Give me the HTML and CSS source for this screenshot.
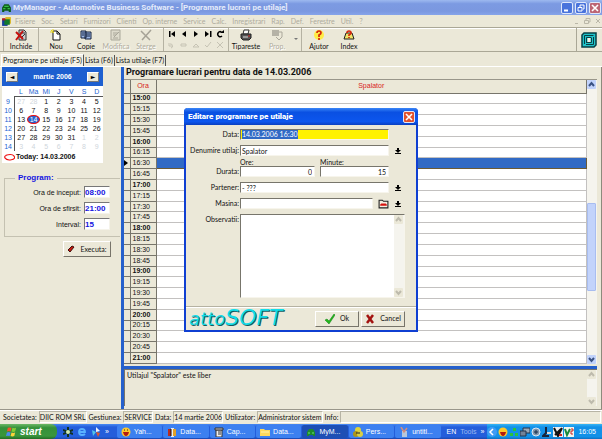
FILE: index.html
```
<!DOCTYPE html>
<html lang="ro">
<head>
<meta charset="utf-8">
<title>MyManager - Automotive Business Software</title>
<link rel="stylesheet" href="styles.css">
</head>
<body>
<div class="app">
  <header class="titlebar">
    <svg class="ico" viewBox="0 0 10 10"><path d="M1 5l2-3h4l2 3v4H7V8H3v1H1z" fill="#0b5c17"/><path d="M3 4h4M2 6h2M6 6h2" stroke="#35c04a"/></svg>
    <h1>MyManager - Automotive Business Software - [Programare lucrari pe utilaje]</h1>
    <div class="winbtns">
      <button class="wb" aria-label="Minimize"><svg viewBox="0 0 10 10"><path d="M2 7.500h4" stroke="#fff" stroke-width="2"/></svg></button>
      <button class="wb" aria-label="Restore"><svg viewBox="0 0 10 10"><path d="M4 4V2h4v4H7M2 4.500h4V8H2z" fill="none" stroke="#fff"/></svg></button>
      <button class="wb close faded" aria-label="Close"><svg viewBox="0 0 10 10"><path d="M2 2l6 6M8 2L2 8" stroke="#fff" stroke-width="1.600"/></svg></button>
    </div>
  </header>
  <nav class="menubar">
    <svg class="ico" viewBox="0 0 10 10"><path d="M1 3h5v6H1z" fill="#163c9c"/><path d="M4 1h5v6H4z" fill="#d9b51c"/><path d="M3 3h5v5H3z" fill="#137a2e"/><path d="M1 2h3v2H1z" fill="#b31d1d"/></svg>
    <button>Fisiere</button><button>Soc.</button><button>Setari</button><button>Furnizori</button><button>Clienti</button><button>Op. interne</button><button>Service</button><button>Calc.</button><button>Inregistrari</button><button>Rap.</button><button>Def.</button><button>Ferestre</button><button>Util.</button><button>?</button>
    <svg class="mdi" viewBox="0 0 28 8"><path d="M2 6.500h3M13 3V1.500h4V5h-1M11.500 3.500h4v3h-4zM23 2l4 4M27 2l-4 4" fill="none" stroke="#bab7a8"/></svg>
  </nav>
  <div class="toolbar">
    <div class="tgroup first">
      <button class="tool"><svg viewBox="0 0 12 12"><path d="M4 1h5l2 2v8H4z" fill="#ccc" stroke="#333"/><path d="M5 4h5M6 9l4-4" stroke="#333"/><path d="M1 3l7 7M8 2L1 11" stroke="#c4120e" stroke-width="2"/></svg>Inchide</button>
    </div>
    <div class="tgroup">
      <button class="tool"><svg viewBox="0 0 12 12"><path d="M3 2h4l3 3v6H3z" fill="#fff" stroke="#111"/><path d="M7 2v3h3" fill="none" stroke="#111"/><path d="M1 1l3 3M3 0v3M0 3h3" stroke="#e5d51b"/></svg>Nou</button>
      <button class="tool"><svg viewBox="0 0 12 12"><path d="M1 2h5v7H1zM5 3h6v7H5z" fill="#9bb6e5" stroke="#15233f"/><path d="M6 5h4M6 7h4M2 4h2M2 6h2" stroke="#15233f"/></svg>Copie</button>
      <button class="tool" disabled><svg viewBox="0 0 12 12"><path d="M1 1h9v10H1z" fill="#dedbcc" stroke="#aaa79a"/><path d="M3 4h5M3 6h3M3 9h5M4 8l5-5" stroke="#aaa79a"/></svg>Modifica</button>
      <button class="tool" disabled><svg viewBox="0 0 12 12"><path d="M1 2l9 9M11 1L2 11" stroke="#a5a296" stroke-width="1.500"/></svg>Sterge</button>
    </div>
    <div class="tgroup navgrid">
      <button aria-label="First"><svg viewBox="0 0 8 8"><path d="M7 1v6L3 4z"/><path d="M1 1h1.500v6H1z"/></svg></button>
      <button aria-label="Previous"><svg viewBox="0 0 8 8"><path d="M6 1v6L2 4z"/></svg></button>
      <button aria-label="Next"><svg viewBox="0 0 8 8"><path d="M2 1v6l4-3z"/></svg></button>
      <button aria-label="Last"><svg viewBox="0 0 8 8"><path d="M1 1v6l4-3z"/><path d="M6 1h1.500v6H6z"/></svg></button>
      <button aria-label="Refresh"><svg viewBox="0 0 8 8"><path d="M6 6A2.500 2.500 0 1 1 5.500 2" fill="none" stroke="#000" stroke-width="1.500"/><path d="M4 3h4V0z"/></svg></button>
      <button disabled aria-label="Undo"><svg viewBox="0 0 8 8"><path d="M2 3a2 2 0 1 1 1 4M1 2v3h3" class="dim"/></svg></button>
      <button disabled aria-label="Remove"><svg viewBox="0 0 8 8"><path d="M1 3h5v2H1z" class="dim"/></svg></button>
      <button disabled aria-label="Edit"><svg viewBox="0 0 8 8"><path d="M1 6l3-3 3 3z" class="dim"/></svg></button>
      <button disabled aria-label="Post"><svg viewBox="0 0 8 8"><path d="M1 4l2 2 4-5" class="dim"/></svg></button>
      <button disabled aria-label="Cancel edit"><svg viewBox="0 0 8 8"><path d="M1 1l6 6M7 1L1 7" class="dim"/></svg></button>
    </div>
    <div class="tgroup print">
      <button class="tool"><svg viewBox="0 0 12 12"><path d="M4 1h5l-1 4H3z" fill="#fff" stroke="#333"/><path d="M1 5h10v4l-2 2H3L1 9z" fill="#555" stroke="#222"/><path d="M3 8h5" stroke="#ddd"/><path d="M8 7h2" stroke="#c22"/></svg>Tipareste</button>
      <button class="tool" disabled><svg viewBox="0 0 12 12"><path d="M1 1h7v6H1z" fill="#b5b2a6"/><path d="M8 3h3v5l-3 3-3-3" fill="none" stroke="#aaa79a"/></svg>Prop.</button>
      <span class="drop"></span>
    </div>
    <div class="tgroup">
      <button class="tool"><svg viewBox="0 0 12 12"><circle cx="6" cy="6" r="5" fill="#ffec45"/><path d="M4 4q0-2 2-2t2 2q0 1-2 2v2M6 9v2" fill="none" stroke="#d5260d" stroke-width="1.700"/></svg>Ajutor</button>
      <button class="tool"><svg viewBox="0 0 12 12"><path d="M1 10l2-6h6l2 6z" fill="#efe46a" stroke="#222"/><path d="M4 4q0-2 2-2t2 2q0 1-2 2v1M6 8v1" fill="none" stroke="#d5260d" stroke-width="1.700"/></svg>Index</button>
    </div>
    <div class="brand"><svg viewBox="0 0 16 16"><path d="M1 3l2-2h12v12l-2 2H1z" fill="#1fc3c9" stroke="#083f44" stroke-width="1.500"/><path d="M3.500 12V3.500h9M12.500 5v7.500H5M5.500 11V5.500h5M10.500 6v4.500H6" fill="none" stroke="#083f44"/><path d="M6.500 6h3v4h-3z" fill="#f4f1e4"/></svg></div>
  </div>
  <div class="tabs" role="tablist">
    <button role="tab" aria-selected="true" class="on">Programare pe utilaje (F5)</button><button role="tab">Lista (F6)</button><button role="tab">Lista utilaje (F7)</button>
  </div>
  <main class="work">
    <aside class="side">
      <section class="cal">
        <div class="calhead"><button aria-label="Luna precedenta">◄</button><strong>martie 2006</strong><button aria-label="Luna urmatoare">►</button></div>
        <table>
          <thead><tr><th></th><th>L</th><th>Ma</th><th>Mi</th><th>J</th><th>V</th><th>S</th><th>D</th></tr></thead>
          <tbody>
            <tr><th>9</th><td class="o">27</td><td class="o">28</td><td>1</td><td>2</td><td>3</td><td>4</td><td>5</td></tr>
            <tr><th>10</th><td>6</td><td>7</td><td>8</td><td>9</td><td>10</td><td>11</td><td>12</td></tr>
            <tr><th>11</th><td>13</td><td class="today"><span>14</span></td><td>15</td><td>16</td><td>17</td><td>18</td><td>19</td></tr>
            <tr><th>12</th><td>20</td><td>21</td><td>22</td><td>23</td><td>24</td><td>25</td><td>26</td></tr>
            <tr><th>13</th><td>27</td><td>28</td><td>29</td><td>30</td><td>31</td><td class="o">1</td><td class="o">2</td></tr>
            <tr><th>14</th><td class="o">3</td><td class="o">4</td><td class="o">5</td><td class="o">6</td><td class="o">7</td><td class="o">8</td><td class="o">9</td></tr>
          </tbody>
        </table>
        <p class="now"><svg viewBox="0 0 12 8"><path d="M3 2q-3 1-2 3 2 3 7 2t3-4Q9 0 2 2" fill="none" stroke="#e11" stroke-width="1.200"/></svg>Today: 14.03.2006</p>
      </section>
      <fieldset class="prog">
        <legend>Program:</legend>
        <label for="h1">Ora de inceput:</label><input id="h1" value="08:00">
        <label for="h2">Ora de sfirsit:</label><input id="h2" value="21:00">
        <label for="h3">Interval:</label><input id="h3" value="15">
      </fieldset>
      <button class="btn exec"><svg viewBox="0 0 8 8"><path d="M1 5l4-4 2 1-4 5z" fill="#c31a10" stroke="#40100c"/></svg>Executa:</button>
    </aside>
    <section class="plan">
      <h2>Programare lucrari pentru data de 14.03.2006</h2>
      <div class="gridwrap">
        <table class="grid">
          <thead><tr><th class="mark"></th><th class="hour">Ora</th><th>Spalator</th></tr></thead>
          <tbody>
            <tr class="h"><th></th><th>15:00</th><td></td></tr>
            <tr><th></th><th>15:15</th><td></td></tr>
            <tr><th></th><th>15:30</th><td></td></tr>
            <tr><th></th><th>15:45</th><td></td></tr>
            <tr class="h"><th></th><th>16:00</th><td></td></tr>
            <tr><th></th><th>16:15</th><td></td></tr>
            <tr class="sel"><th><i></i></th><th>16:30</th><td></td></tr>
            <tr><th></th><th>16:45</th><td></td></tr>
            <tr class="h"><th></th><th>17:00</th><td></td></tr>
            <tr><th></th><th>17:15</th><td></td></tr>
            <tr><th></th><th>17:30</th><td></td></tr>
            <tr><th></th><th>17:45</th><td></td></tr>
            <tr class="h"><th></th><th>18:00</th><td></td></tr>
            <tr><th></th><th>18:15</th><td></td></tr>
            <tr><th></th><th>18:30</th><td></td></tr>
            <tr><th></th><th>18:45</th><td></td></tr>
            <tr class="h"><th></th><th>19:00</th><td></td></tr>
            <tr><th></th><th>19:15</th><td></td></tr>
            <tr><th></th><th>19:30</th><td></td></tr>
            <tr><th></th><th>19:45</th><td></td></tr>
            <tr class="h"><th></th><th>20:00</th><td></td></tr>
            <tr><th></th><th>20:15</th><td></td></tr>
            <tr><th></th><th>20:30</th><td></td></tr>
            <tr><th></th><th>20:45</th><td></td></tr>
            <tr class="h"><th></th><th>21:00</th><td></td></tr>
          </tbody>
        </table>
        <div class="sb"><svg viewBox="0 0 9 9"><path d="M2 6l2.500-3L7 6"/></svg><span class="above"></span><span class="thumb"></span><span class="below"></span><svg viewBox="0 0 9 9"><path d="M2 3l2.500 3L7 3"/></svg></div>
      </div>
      <div class="memo"><p>Utilajul "Spalator" este liber</p><div class="sb off"><svg viewBox="0 0 9 9"><path d="M2 6l2.500-3L7 6"/></svg><span class="below"></span><svg viewBox="0 0 9 9"><path d="M2 3l2.500 3L7 3"/></svg></div></div>
    </section>
  </main>
  <footer class="status">
    <span>Societatea:</span><b class="s1">DIIC ROM SRL</b>
    <span>Gestiunea:</span><b class="s2">SERVICE</b>
    <span>Data:</span><b class="s3">14 martie 2006</b>
    <span>Utilizator:</span><b class="s4">Administrator sistem</b>
    <span>Info:</span><b class="s5"></b>
  </footer>
  <div class="taskbar">
    <button class="start"><svg viewBox="0 0 12 12"><path d="M2 2q2-1 4 0L5 6Q3 5 1 6z" fill="#f0562b"/><path d="M7 2q2 1 4 0l-1 4q-2 1-4 0z" fill="#84cc35"/><path d="M1 7q2-1 4 0l-1 4q-2-1-4 0z" fill="#4a8bf0"/><path d="M6 7q2 1 4 0l-1 4q-2 1-4 0z" fill="#fbd33b"/></svg>start</button>
    <div class="quick">
      <svg viewBox="0 0 10 10"><path d="M5 0v10M0 3l10 4M0 7l10-4" stroke="#13321f" stroke-width="2"/><circle cx="5" cy="5" r="2" fill="#cfe9b0"/></svg>
      <svg viewBox="0 0 10 10"><path d="M2 5h6q0-3-3-3T2 5t3 3q2 0 3-1" fill="none" stroke="#5ab2ff" stroke-width="1.800"/></svg>
      <svg viewBox="0 0 10 10"><path d="M1 3l4 2-3 4z" fill="#52c4e8"/><path d="M5 0l4 4-4 1z" fill="#eaf2ff"/><path d="M5 5l4 1-2 4z" fill="#e0572b"/></svg>
      <span>»</span>
    </div>
    <div class="tasks">
      <button><svg viewBox="0 0 10 10"><circle cx="5" cy="5" r="4.500" fill="#ffc92b"/><path d="M2 5h6q-1 4-3 4T2 5" fill="#b21b10"/><path d="M3 3h1M6 3h1" stroke="#222"/></svg>Yah...</button>
      <button><svg viewBox="0 0 10 10"><path d="M1 2h3v7H1z" fill="#b82b20"/><path d="M4 1h3v9H4z" fill="#eee"/><path d="M6 2h3v7H6z" fill="#e2a025"/><path d="M4 2v7" stroke="#111"/></svg>Data...</button>
      <button><svg viewBox="0 0 10 10"><path d="M2 3h6v7H2z" fill="#eee" stroke="#333"/><path d="M1 1h8v2H1zM4 5h3M4 7h3" fill="#ccc" stroke="#333"/></svg>Cap...</button>
      <button><svg viewBox="0 0 10 10"><path d="M0 2h4l1 1h5v6H0z" fill="#ffd95a"/><path d="M1 5h8" stroke="#fff3b0"/></svg>Data...</button>
      <button class="act"><svg viewBox="0 0 10 10"><path d="M1 5l2-3h4l2 3v4H7V8H3v1H1z" fill="#1d8c2c"/><path d="M2 6h2M6 6h2" stroke="#6ce47a"/></svg>MyM...</button>
      <button><svg viewBox="0 0 10 10"><circle cx="5" cy="3" r="3" fill="#ddd33c"/><circle cx="3" cy="7" r="3" fill="#ac9618"/><circle cx="7" cy="7" r="3" fill="#d8cf45"/><path d="M3 6h4" stroke="#222"/></svg>Pers...</button>
      <button><svg viewBox="0 0 10 10"><path d="M3 4h5v6H3z" fill="#b5c6dc"/><path d="M2 0l3 5 3-4" fill="none" stroke="#d48d7c" stroke-width="1.500"/></svg>untitl...</button>
    </div>
    <div class="lang"><span>EN</span><em>Tools</em><span>»</span></div>
    <div class="tray">
      <svg viewBox="0 0 10 10"><circle cx="5" cy="5" r="5" fill="#3f9cf5"/><path d="M6 2L3 5l3 3" fill="none" stroke="#fff" stroke-width="1.500"/></svg>
      <svg viewBox="0 0 10 10"><circle cx="5" cy="5" r="4.500" fill="#ffc92b"/><path d="M2 5h6q-1 4-3 4T2 5" fill="#b21b10"/></svg>
      <svg viewBox="0 0 10 10"><path d="M4 1h3v3H4zM1 6h3v3H1zM6 6h3v3H6z" fill="#2ac23e"/></svg>
      <svg viewBox="0 0 10 10"><path d="M3 1h7v5H3z" fill="#9aa9b8" stroke="#23354c"/><path d="M0 4h6v5H0z" fill="#728399" stroke="#23354c"/></svg>
      <svg viewBox="0 0 10 10"><circle cx="5" cy="5" r="4" fill="#7f96ad" stroke="#dce9f5"/><path d="M3 5h4M5 3v4" stroke="#172d4b"/></svg>
      <svg viewBox="0 0 10 10"><path d="M4 0v6l-3 3h6" fill="none" stroke="#17253b" stroke-width="2"/><path d="M5 6h4" stroke="#ddd" stroke-width="2"/></svg>
      <svg viewBox="0 0 10 10"><path d="M0 0h10v10H0z" fill="#eee"/><path d="M1 1l4 8 4-8M2 8l6-6" fill="none" stroke="#111" stroke-width="2"/><path d="M6 8h3" stroke="#c22" stroke-width="2"/></svg>
      <svg viewBox="0 0 10 10"><path d="M0 0h10v10H0z" fill="#f2f5ee"/><path d="M1 2l2 6 3-6" fill="none" stroke="#198a3b" stroke-width="2"/><path d="M7 2h2v2H7v3h2" fill="none" stroke="#c22"/></svg>
      <time>16:05</time>
    </div>
  </div>

  <form class="dialog" role="dialog" aria-labelledby="dt">
    <div class="dtitle"><strong id="dt">Editare programare pe utilaje</strong><button type="button" class="wb close" aria-label="Inchide"><svg viewBox="0 0 10 10"><path d="M2 2l6 6M8 2L2 8" stroke="#fff" stroke-width="1.600"/></svg></button></div>
    <div class="fields">
      <label for="f1">Data:</label><div class="ctl yellow"><input id="f1" value="14.03.2006 16:30" size="12"></div><span></span>
      <label for="f2">Denumire utilaj:</label><input class="ctl" id="f2" value="Spalator"><button type="button" class="pick" aria-label="Lista utilaje"></button>
      <label class="dur" for="f3">Durata:</label>
      <div class="pair"><label for="f3">Ore:</label><label for="f4">Minute:</label><input class="ctl num" id="f3" value="0"><input class="ctl num" id="f4" value="15"></div><span></span>
      <label for="f5">Partener:</label><input class="ctl" id="f5" value="- ???"><button type="button" class="pick" aria-label="Lista parteneri"></button>
      <label for="f6">Masina:</label>
      <div class="car"><input class="ctl" id="f6"><button type="button" aria-label="Deschide masina"><svg viewBox="0 0 10 10"><path d="M1 2h3l1 1h4v6H1z" fill="#f3eee0" stroke="#222"/><path d="M2 6l1-1h4l1 1v1H2z" fill="#d5120e"/></svg></button></div><button type="button" class="pick" aria-label="Lista masini"></button>
      <label class="top" for="f7">Observatii:</label>
      <div class="obs"><textarea id="f7"></textarea><div class="sb off"><svg viewBox="0 0 9 9"><path d="M2 6l2.500-3L7 6"/></svg><span class="below"></span><svg viewBox="0 0 9 9"><path d="M2 3l2.500 3L7 3"/></svg></div></div>
    </div>
    <div class="dfoot">
      <span class="logo">atto<b>SOFT</b></span>
      <button type="button" class="btn"><svg viewBox="0 0 10 10"><path d="M0 6l2-1 2 2 5-7 1 1-6 9z" fill="#23b81c" stroke="#0f7d12" stroke-width=".5"/></svg>Ok</button>
      <button type="button" class="btn"><svg viewBox="0 0 10 10"><path d="M2 1l6 8M8 1L2 9" stroke="#a31310" stroke-width="2.500"/></svg>Cancel</button>
    </div>
  </form>
</div>
</body>
</html>
```
FILE: styles.css
```
* { box-sizing: border-box; }
html, body { height: 100%; }
body { margin: 0; font: 7px/9px Lato, "Liberation Sans", sans-serif; color: #111; background: #ebe8d8; overflow: hidden; }
button, input, textarea { font: inherit; color: inherit; margin: 0; padding: 0; border: 0; background: none; border-radius: 0; outline: 0; }
button { white-space: nowrap; }
svg { display: block; flex: none; }
h1, h2, p { margin: 0; }
.cal, .prog, .grid, .taskbar { font-family: "Liberation Sans", Arial, sans-serif; }
.app { position: relative; height: 100%; display: flex; flex-direction: column; }
.ico { width: 11px; height: 11px; }

.titlebar { flex: none; height: 15px; display: flex; align-items: center; gap: 1px; padding: 0 1px; background: linear-gradient(#9db9ef, #7c9ae2 25%, #7b98e0 75%, #86a4ea); color: #e4ebfa; }
.titlebar h1 { flex: 1; font: bold 8px/12px Roboto, sans-serif; white-space: nowrap; }
.winbtns { display: flex; gap: 2px; }
.wb { width: 12px; height: 12px; border: 1px solid #dfe8fb; border-radius: 2px; background: #4a74dc; }
.wb svg { width: 10px; height: 10px; }
.wb.close { background: #e1522d; }
.wb.faded { background: #bd6675; }

.menubar { flex: none; height: 12px; display: flex; align-items: center; gap: 6px; padding: 0 1px; color: #aeab9d; }
.menubar .ico { margin-right: -3px; }
.menubar .mdi { width: 28px; height: 8px; margin-left: auto; }

.toolbar { flex: none; height: 25px; display: flex; border-top: 1px solid #aaa796; border-bottom: 1px solid #aaa796; box-shadow: inset 0 1px #fff; }
.tgroup { display: flex; padding: 0 2px; border-right: 1px solid #b5b2a2; }
.tgroup.first { margin-left: 3px; border-left: 1px solid #b5b2a2; }
.tool { width: 30px; display: flex; flex-direction: column; align-items: center; gap: 1px; padding-top: 1px; }
.tool svg { width: 12px; height: 12px; }
.tool:disabled { color: #aeab9d; text-shadow: 1px 1px #fff; }
.navgrid { display: grid; grid-template-columns: repeat(5, 12px); align-content: center; row-gap: 3px; border-right: 1px solid #b5b2a2; }
.navgrid svg { width: 8px; height: 8px; margin: 0 auto; }
.dim { fill: none; stroke: #c6c3b4; }
.print { width: 73px; padding: 0 0 0 1px; }
.print .tool:first-child { width: 32px; }
.drop { align-self: center; margin: 0 3px 0 auto; border: 2px solid transparent; border-top-color: #777; }
.tgroup:nth-child(5) { border-right: 0; }
.brand { margin-left: auto; width: 26px; padding: 4px; border-left: 1px solid #aaa796; }
.brand svg { width: 16px; height: 16px; }

.tabs { flex: none; display: flex; height: 15px; padding: 2px 1px 0 1px; border-bottom: 1px solid #fff; }
.tabs button { border-right: 1px solid #555; padding: 0 1px; margin-top: 1px; }
.tabs .on { margin-top: 0; background: #f3f1e6; border-left: 1px solid #fff; border-top: 1px solid #fff; }

.work { flex: 1; min-height: 0; display: flex; padding-right: 4px; border-right: 1px solid #8d8a7c; }
.side { width: 121px; flex: none; display: flex; flex-direction: column; align-items: flex-start; }
.cal { width: 101px; margin-left: 2px; background: #fff; padding-bottom: 1px; }
.calhead { height: 19px; display: flex; align-items: center; justify-content: space-between; padding: 0 4px; background: #1d5fd0; color: #fff; }
.calhead button { width: 12px; height: 10px; font: 6px/8px "DejaVu Sans", sans-serif; color: #000; background: #ebe8d8; border: 1px solid; border-color: #fff #777 #777 #fff; }
.cal table { width: 100%; border-collapse: collapse; table-layout: fixed; }
.cal tr { height: 9px; }
.cal td, .cal th { padding: 0; text-align: center; line-height: 9px; font-weight: normal; }
.cal th { color: #2465d2; }
.cal thead th { padding-top: 1px; border-bottom: 1px solid #555; }
.cal thead th:first-child { border-bottom: 0; }
.cal tbody th { border-right: 1px solid #555; }
.cal .o { color: #cfd6dc; }
.today span { display: block; height: 9px; border: 1px solid #e11; border-radius: 50%; background: #2465d2; color: #fff; line-height: 7px; }
.now { display: flex; align-items: center; gap: 1px; padding: 1px 2px; font-weight: bold; }
.now svg { width: 11px; height: 8px; }
.prog { align-self: stretch; display: grid; grid-template-columns: 1fr 26px; gap: 4px 3px; align-items: center; margin: 10px 1px 0 4px; padding: 3px 10px 6px; border: 1px solid #c4c1b1; border-right: 0; }
.prog legend { padding: 0 3px; color: #1414e0; font: bold 8px/10px "Liberation Sans", Arial, sans-serif; }
.prog label { text-align: right; }
.prog input { width: 100%; height: 12px; background: #fff; border: 1px solid; border-color: #777 #f5f3ea #f5f3ea #777; color: #1414e0; font-size: 8px; font-weight: bold; }
.btn { display: flex; align-items: center; justify-content: center; gap: 5px; width: 44px; height: 16px; border: 1px solid; border-color: #fff #77746a #77746a #fff; }
.btn svg { width: 10px; height: 10px; }
.exec { width: 48px; margin: 4px 0 0 63px; }
.exec svg { width: 8px; height: 8px; }

.plan { flex: 1; min-width: 0; display: flex; flex-direction: column; border-left: 3px solid #2560cc; }
.plan h2 { flex: none; height: 12px; padding-left: 2px; font: bold 9px/11px Roboto, sans-serif; }
.gridwrap { flex: 1; min-height: 0; display: flex; padding-bottom: 2px; border-top: 1px solid #99968a; }
.grid { flex: 1; height: 100%; border-collapse: collapse; table-layout: fixed; background: #fff; }
.grid th, .grid td { padding: 0; line-height: 8px; }
.grid th { background: #ebe8d8; border: 1px solid #77756b; border-left: 0; font-weight: normal; text-align: left; }
.grid tbody th:nth-child(2) { padding-left: 2px; }
.grid thead th { height: 13px; text-align: center; color: #d8241b; border-top: 0; }
.grid td { border: 1px solid #c3c1c0; }
.grid .mark { width: 6px; }
.grid .hour { width: 26px; }
.grid .h th { font-weight: bold; }
.grid .sel td { background: #316ac5; border-color: #6b5a35; }
.grid i { display: block; border: 3px solid transparent; border-left: 4px solid #000; border-right: 0; }
.sb { flex: none; width: 10px; display: flex; flex-direction: column; background: #f5f4ee; }
.sb svg { width: 9px; height: 9px; background: #c2d3fb; border-radius: 1px; fill: none; stroke: #3b5384; stroke-width: 2; }
.sb .above { flex: 117; }
.sb .thumb { flex: 88; width: 9px; background: #c2d3fb; border: 1px solid #a8bdf0; border-radius: 1px; }
.sb .below { flex: 66; }
.sb.off svg { background: #ebe8d8; stroke: #bebbad; }
.memo { flex: none; height: 40px; margin-bottom: 3px; display: flex; justify-content: space-between; border-top: 3px solid #2560cc; box-shadow: inset 1px 1px #77756b; }
.memo p { padding: 2px 3px; }
.memo .sb { margin-top: 1px; }

.status { flex: none; height: 15px; display: flex; align-items: center; gap: 2px; padding: 0 1px 0 3px; border-top: 1px solid #99968a; box-shadow: inset 0 1px #fff; white-space: nowrap; }
.status b { height: 12px; padding: 1px 0; font-weight: normal; border: 1px solid; border-color: #b7b4a5 #fff #fff #b7b4a5; }
.status .s5 { flex: 1; }

.taskbar { flex: none; height: 15px; display: flex; background: linear-gradient(#4a8bf3, #245edb 20%, #245edb 85%, #1a48ae); color: #fff; }
.start { width: 57px; display: flex; align-items: center; gap: 3px; padding-left: 6px; background: linear-gradient(#6cb866, #35913a 25%, #3a963c 80%, #226c26); border-radius: 0 6px 6px 0; font: italic bold 10px/13px "Liberation Sans", sans-serif; }
.start svg { width: 11px; height: 11px; }
.quick { width: 60px; display: flex; align-items: center; gap: 4px; padding-left: 6px; }
.quick svg { width: 10px; height: 10px; }
.tasks { flex: 1; display: flex; gap: 1px; }
.tasks button { flex: 1; min-width: 0; display: flex; align-items: center; gap: 3px; padding-left: 4px; margin: 1px 0; border-radius: 2px; background: #3c80f0; }
.tasks svg { width: 10px; height: 10px; }
.tasks .act { background: #1d4fb5; }
.lang { width: 47px; display: flex; align-items: center; justify-content: flex-end; gap: 4px; padding-right: 3px; }
.lang em { font-style: normal; color: #9db8ee; }
.tray { display: flex; align-items: center; gap: 1px; padding: 0 6px 0 0; background: linear-gradient(#38b5f5, #1291e8 20%, #1291e8 85%, #0e6fc0); }
.tray svg { width: 10px; height: 10px; }
.tray time { margin-left: 3px; }

.dialog { position: absolute; left: 184px; top: 108px; width: 234px; background: #ebe8d8; border: 2px solid #0f3fd2; border-top: 0; border-radius: 4px 4px 0 0; }
.dtitle { height: 17px; display: flex; align-items: center; justify-content: space-between; margin: 0 -2px; padding: 0 3px 0 4px; border-radius: 4px 4px 0 0; background: linear-gradient(#3a86f8, #0a50e2 25%, #0c56ee 80%, #0a3fc0); color: #fff; font: bold 8px/12px Roboto, sans-serif; }
.fields { display: grid; grid-template-columns: 53px 149px 16px; column-gap: 1px; row-gap: 5px; align-items: center; padding: 4px 0 8px; }
.fields > label { text-align: right; white-space: nowrap; }
.ctl { display: block; width: 100%; min-width: 0; height: 11px; padding: 0 1px; background: #fff; border: 1px solid; border-color: #77756b #f7f5ec #f7f5ec #77756b; }
.yellow { background: #fff200; }
.yellow input { display: block; width: 56px; height: 9px; background: #316ac5; color: #fff; }
.pair { display: grid; grid-template-columns: 75px 69px; column-gap: 5px; margin-top: -2px; }
.pair label { line-height: 7px; }
.num { text-align: right; padding-right: 2px; }
.dur { align-self: end; padding-bottom: 1px; }
.pick { justify-self: center; width: 6px; height: 7px; border-bottom: 1px solid #000; }
.pick::before { content: ""; display: block; width: 2px; height: 2px; margin: 0 auto; background: #000; }
.pick::after { content: ""; display: block; width: 0; margin: 0 auto; border: 3px solid transparent; border-top-color: #000; border-bottom: 0; }
.car { display: flex; align-items: center; gap: 5px; height: 11px; }
.car .ctl { flex: 1; }
.car svg { width: 11px; height: 11px; }
.top { align-self: start; padding-top: 1px; }
.obs { grid-column: 2 / 4; display: flex; height: 84px; margin-right: 1px; background: #fff; border: 1px solid; border-color: #77756b #f7f5ec #f7f5ec #77756b; }
.obs textarea { flex: 1; min-width: 0; resize: none; }
.dfoot { height: 24px; display: flex; align-items: center; gap: 2px; padding: 0 11px 0 3px; border-top: 1px solid #b5b2a2; box-shadow: inset 0 1px #fff; }
.logo { margin-right: auto; font: italic 200 18px/20px "DejaVu Sans", sans-serif; color: #12dce8; text-shadow: 1px 1px #145a60; }
.logo b { font-size: 22px; font-weight: 200; }
```
